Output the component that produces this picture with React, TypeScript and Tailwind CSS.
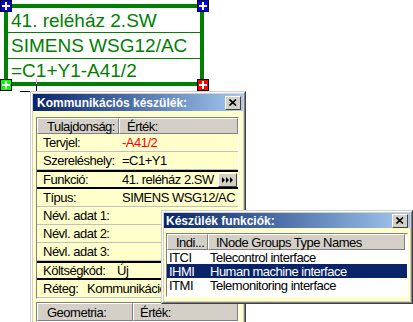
const Corner = ({ fill }: { fill: string }) => (
  <svg width="12" height="12" viewBox="0 0 12 12">
    <rect x="0.5" y="0.5" width="11" height="11" fill={fill} stroke="#000000" />
    <rect x="5" y="2" width="2" height="8" fill="#ffffff" />
    <rect x="2" y="5" width="8" height="2" fill="#ffffff" />
  </svg>
)

const CloseBtn = () => (
  <div className="w-[16px] h-[14px] bg-[#d4d0c8] border border-t-white border-l-white border-r-[#404040] border-b-[#404040] flex items-center justify-center">
    <svg width="8" height="7" viewBox="0 0 8 7">
      <path d="M0.5 0.5 L7 6.5 M7 0.5 L0.5 6.5" stroke="#000" strokeWidth="1.6" />
    </svg>
  </div>
)

const ui = "font-['Liberation_Sans',Arial,sans-serif] text-[13px] tracking-[-0.5px] leading-none text-black whitespace-nowrap"

const Row = ({ label, value, thick, red, children }: { label: string; value?: string; thick?: boolean; red?: boolean; children?: React.ReactNode }) => (
  <div className={`flex items-center ${thick ? "h-[19px] border-y-2 border-black" : "h-[18px] border-b border-[#c0c0c0]"}`}>
    <div className="w-[85px] pl-[6px]">{label}</div>
    <div className={`flex-1 ${red ? "text-[#ff0000]" : ""}`}>{value}</div>
    {children}
  </div>
)

export default function App() {
  return (
    <div className="relative w-[413px] h-[322px] bg-white overflow-hidden">
      {/* green symbol box */}
      <div className="absolute left-[4px] top-[4px] w-[200px] h-[82px] border-4 border-[#008000] flex flex-col font-['Liberation_Sans',Arial,sans-serif] text-[19px] leading-none text-[#008000]">
        <div className="h-[25px] border-b border-[#008000] flex items-center pl-[3px]">41. reléház 2.SW</div>
        <div className="h-[26px] border-b border-[#008000] flex items-center pl-[3px]">SIMENS WSG12/AC</div>
        <div className="flex-1 flex items-center pl-[3px]">=C1+Y1-A41/2</div>
      </div>
      <div className="absolute left-0 top-0"><Corner fill="#0000ff" /></div>
      <div className="absolute left-[197px] top-0"><Corner fill="#0000ff" /></div>
      <div className="absolute left-0 top-[79px]"><Corner fill="#00ff00" /></div>
      <div className="absolute left-[197px] top-[79px]"><Corner fill="#ff0000" /></div>
      <div className="absolute left-[36px] top-[79px] w-[1px] h-[8px] bg-[#ff80ff]" />

      {/* cursor */}
      <svg className="absolute left-[18px] top-[84px]" width="20" height="16" viewBox="0 0 20 16">
        <path d="M2 7.5 H18.5 M18.5 0 V7.5 M14.5 7.5 V16" stroke="#000" strokeWidth="1" />
      </svg>

      {/* Kommunikációs készülék dialog */}
      <div className={`absolute left-[30px] top-[91px] w-[216px] h-[250px] bg-[#d4d0c8] border border-t-[#d4d0c8] border-l-[#d4d0c8] border-r-[#404040] border-b-[#404040] ${ui}`}>
        <div className="h-full border border-t-white border-l-white border-r-[#808080] border-b-[#808080] p-[1px] flex flex-col">
          <div className="h-[17px] bg-linear-to-r from-[#0a246a] to-[#a6caf0] flex items-center justify-between pl-[4px] pr-[2px]">
            <span className="font-bold text-[12px] tracking-normal text-white">Kommunikációs készülék:</span>
            <CloseBtn />
          </div>
          <div className="flex-1 bg-[#ffffcc] pt-[6px] pl-[3px] pr-[4px] flex flex-col gap-[3px]">
            <div className="border border-t-[#808080] border-l-[#808080] border-r-white border-b-white">
              <div className="flex h-[16px]">
                <div className="w-[82px] bg-[#d4d0c8] border border-t-white border-l-white border-r-[#808080] border-b-[#808080] flex items-center pl-[9px]">Tulajdonság:</div>
                <div className="flex-1 bg-[#d4d0c8] border border-t-white border-l-white border-r-[#808080] border-b-[#808080] flex items-center pl-[7px]">Érték:</div>
              </div>
              <Row label="Tervjel:" value="-A41/2" red />
              <Row label="Szereléshely:" value="=C1+Y1" />
              <Row label="Funkció:" value="41. reléház 2.SW" thick>
                <div className="w-[19px] h-[14px] mr-[1px] bg-[#d4d0c8] border border-t-white border-l-white border-r-[#404040] border-b-[#404040] flex items-center justify-center">
                  <svg width="11" height="6" viewBox="0 0 11 6">
                    <path d="M0 0 L3 3 L0 6 Z M4 0 L7 3 L4 6 Z M8 0 L11 3 L8 6 Z" fill="#000" />
                  </svg>
                </div>
              </Row>
              <Row label="Típus:" value="SIMENS WSG12/AC" />
              <Row label="Névl. adat 1:" />
              <Row label="Névl. adat 2:" />
              <Row label="Névl. adat 3:" />
              <div className="flex items-center h-[19px] border-y-2 border-black">
                <div className="w-[80px] pl-[6px]">Költségkód:</div>
                <div>Új</div>
              </div>
              <div className="flex items-center h-[18px] border-b border-[#c0c0c0]">
                <div className="w-[50px] pl-[6px]">Réteg:</div>
                <div>Kommunikációs</div>
              </div>
            </div>
            <div className="border border-t-[#808080] border-l-[#808080] border-r-white border-b-white">
              <div className="flex h-[18px]">
                <div className="w-[96px] bg-[#d4d0c8] border border-t-white border-l-white border-r-[#808080] border-b-[#808080] flex items-center pl-[9px]">Geometria:</div>
                <div className="flex-1 bg-[#d4d0c8] border border-t-white border-l-white border-r-[#808080] border-b-[#808080] flex items-center pl-[6px]">Érték:</div>
              </div>
            </div>
          </div>
        </div>
      </div>

      {/* Készülék funkciók dialog */}
      <div className={`absolute left-[161px] top-[210px] w-[252px] h-[94px] bg-[#d4d0c8] border border-t-[#d4d0c8] border-l-[#d4d0c8] border-r-[#404040] border-b-[#404040] ${ui}`}>
        <div className="h-full border border-t-white border-l-white border-r-[#808080] border-b-[#808080] p-[1px] flex flex-col">
          <div className="h-[15px] bg-linear-to-r from-[#0a246a] to-[#a6caf0] flex items-center justify-between pl-[2px] pr-[2px]">
            <span className="font-bold text-[12px] tracking-normal text-white">Készülék funkciók:</span>
            <CloseBtn />
          </div>
          <div className="flex-1 bg-[#ffffcc] pt-[5px] px-[2px] pb-[4px]">
            <div className="h-full bg-white border border-t-[#808080] border-l-[#808080] border-r-white border-b-white">
              <div className="flex h-[16px]">
                <div className="w-[41px] bg-[#d4d0c8] border border-t-white border-l-white border-r-[#808080] border-b-[#808080] flex items-center pl-[8px]">Indi...</div>
                <div className="w-[197px] bg-[#d4d0c8] border border-t-white border-l-white border-r-[#808080] border-b-[#808080] flex items-center pl-[7px]">INode Groups Type Names</div>
              </div>
              {[
                ["ITCI", "Telecontrol interface", false],
                ["IHMI", "Human machine interface", true],
                ["ITMI", "Telemonitoring interface", false],
              ].map(([code, name, sel]) => (
                <div key={code as string} className={`flex items-center h-[14px] ${sel ? "bg-[#0a246a] text-white" : ""}`}>
                  <div className="w-[43px] pl-[2px]">{code}</div>
                  <div>{name}</div>
                </div>
              ))}
            </div>
          </div>
        </div>
      </div>
    </div>
  )
}
